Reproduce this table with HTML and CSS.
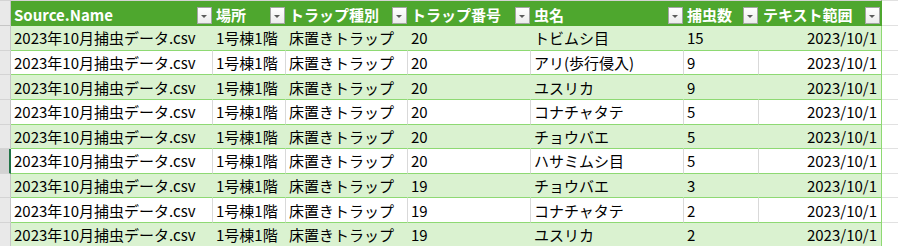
FILE: index.html
```html
<!DOCTYPE html>
<html lang="ja">
<head>
<meta charset="utf-8">
<link rel="stylesheet" href="styles.css">
</head>
<body>
<div class="sheet">
  <div class="row head">
    <div class="gut"></div>
    <div class="c c1"><span>Source.Name</span><i class="fb"></i></div>
    <div class="c c2"><span>場所</span><i class="fb"></i></div>
    <div class="c c3"><span>トラップ種別</span><i class="fb"></i></div>
    <div class="c c4"><span>トラップ番号</span><i class="fb"></i></div>
    <div class="c c5"><span>虫名</span><i class="fb"></i></div>
    <div class="c c6"><span>捕虫数</span><i class="fb"></i></div>
    <div class="c c7"><span>テキスト範囲</span><i class="fb"></i></div>
    <div class="fill"></div>
  </div>
  <div class="row band">
    <div class="gut"></div>
    <div class="c c1">2023年10月捕虫データ.csv</div><div class="c c2">1号棟1階</div><div class="c c3">床置きトラップ</div><div class="c c4">20</div><div class="c c5">トビムシ目</div><div class="c c6">15</div><div class="c c7">2023/10/1</div>
    <div class="fill"></div>
  </div>
  <div class="row plain">
    <div class="gut"></div>
    <div class="c c1">2023年10月捕虫データ.csv</div><div class="c c2">1号棟1階</div><div class="c c3">床置きトラップ</div><div class="c c4">20</div><div class="c c5">アリ(歩行侵入)</div><div class="c c6">9</div><div class="c c7">2023/10/1</div>
    <div class="fill"></div>
  </div>
  <div class="row band">
    <div class="gut"></div>
    <div class="c c1">2023年10月捕虫データ.csv</div><div class="c c2">1号棟1階</div><div class="c c3">床置きトラップ</div><div class="c c4">20</div><div class="c c5">ユスリカ</div><div class="c c6">9</div><div class="c c7">2023/10/1</div>
    <div class="fill"></div>
  </div>
  <div class="row plain">
    <div class="gut"></div>
    <div class="c c1">2023年10月捕虫データ.csv</div><div class="c c2">1号棟1階</div><div class="c c3">床置きトラップ</div><div class="c c4">20</div><div class="c c5">コナチャタテ</div><div class="c c6">5</div><div class="c c7">2023/10/1</div>
    <div class="fill"></div>
  </div>
  <div class="row band">
    <div class="gut"></div>
    <div class="c c1">2023年10月捕虫データ.csv</div><div class="c c2">1号棟1階</div><div class="c c3">床置きトラップ</div><div class="c c4">20</div><div class="c c5">チョウバエ</div><div class="c c6">5</div><div class="c c7">2023/10/1</div>
    <div class="fill"></div>
  </div>
  <div class="row plain sel">
    <div class="gut"></div>
    <div class="c c1">2023年10月捕虫データ.csv</div><div class="c c2">1号棟1階</div><div class="c c3">床置きトラップ</div><div class="c c4">20</div><div class="c c5">ハサミムシ目</div><div class="c c6">5</div><div class="c c7">2023/10/1</div>
    <div class="fill"></div>
  </div>
  <div class="row band">
    <div class="gut"></div>
    <div class="c c1">2023年10月捕虫データ.csv</div><div class="c c2">1号棟1階</div><div class="c c3">床置きトラップ</div><div class="c c4">19</div><div class="c c5">チョウバエ</div><div class="c c6">3</div><div class="c c7">2023/10/1</div>
    <div class="fill"></div>
  </div>
  <div class="row plain">
    <div class="gut"></div>
    <div class="c c1">2023年10月捕虫データ.csv</div><div class="c c2">1号棟1階</div><div class="c c3">床置きトラップ</div><div class="c c4">19</div><div class="c c5">コナチャタテ</div><div class="c c6">2</div><div class="c c7">2023/10/1</div>
    <div class="fill"></div>
  </div>
  <div class="row band">
    <div class="gut"></div>
    <div class="c c1">2023年10月捕虫データ.csv</div><div class="c c2">1号棟1階</div><div class="c c3">床置きトラップ</div><div class="c c4">19</div><div class="c c5">ユスリカ</div><div class="c c6">2</div><div class="c c7">2023/10/1</div>
    <div class="fill"></div>
  </div>
</div>
</body>
</html>
```
FILE: styles.css
```css
html, body {
  margin: 0;
  padding: 0;
  background: #ffffff;
  overflow: hidden;
}
.sheet {
  display: flex;
  flex-direction: column;
  width: 898px;
  font-family: "Noto Sans CJK JP", "Noto Sans", sans-serif;
  font-size: 15px;
  color: #000000;
}
.row {
  display: flex;
  height: 24.625px;
  box-sizing: border-box;
}
.row.head {
  height: 26px;
}
.gut {
  flex: none;
  width: 11px;
  box-sizing: border-box;
  background: #e9e9e9;
  border-right: 1px solid #c6c6c6;
  border-bottom: 1px solid #d4d4d4;
}
.head .gut {
  border-top: 1px solid #d4d4d4;
  border-bottom: 1px solid #c6c6c6;
}
.sel .gut {
  background: #d2d2d2;
  border-right: 2px solid #217346;
}
.fill {
  flex: 1;
  box-sizing: border-box;
  border-bottom: 1px solid #e1e1e1;
}
.head .fill {
  border-top: 1px solid #e1e1e1;
}
.c {
  flex: none;
  box-sizing: border-box;
  display: flex;
  align-items: center;
  padding: 0 0 0 3px;
  line-height: 1;
  white-space: nowrap;
  overflow: hidden;
  border-bottom: 1px solid #8ed973;
  border-right: 1px solid #d9d9d9;
}
.band .c {
  background: #daf2d0;
  border-right-color: #daf2d0;
}
.plain .c {
  background: #ffffff;
}
.c1 { width: 202px; }
.c2 { width: 73px; }
.c3 { width: 122px; }
.c4 { width: 123px; }
.c5 { width: 153px; }
.c6 { width: 75px; }
.c7 {
  width: 123px;
  justify-content: flex-end;
  padding: 0 4px 0 0;
}
.row .c7 {
  border-right: 1px solid #8ed973;
}
.c6, .c4 { padding-left: 3px; }

.head .c {
  background: #4ea72e;
  color: #ffffff;
  font-weight: bold;
  border-top: 1px solid #d4d4d4;
  border-bottom: none;
  border-right: none;
  padding: 0 1px 0 3px;
  justify-content: space-between;
}
.head .c7 {
  width: 123px;
  border-right: 1px solid #4ea72e;
  padding: 0 1px 0 4px;
}
.head .c span {
  padding-top: 1px;
}
.fb {
  flex: none;
  position: relative;
  width: 15px;
  height: 17px;
  box-sizing: border-box;
  border: 1px solid #a5a5a5;
  background: linear-gradient(#ffffff, #ececec);
  margin-top: 3px;
}
.fb::after {
  content: "";
  position: absolute;
  left: 3px;
  top: 7px;
  border-left: 3.5px solid transparent;
  border-right: 3.5px solid transparent;
  border-top: 3px solid #5b5b5b;
}
```
